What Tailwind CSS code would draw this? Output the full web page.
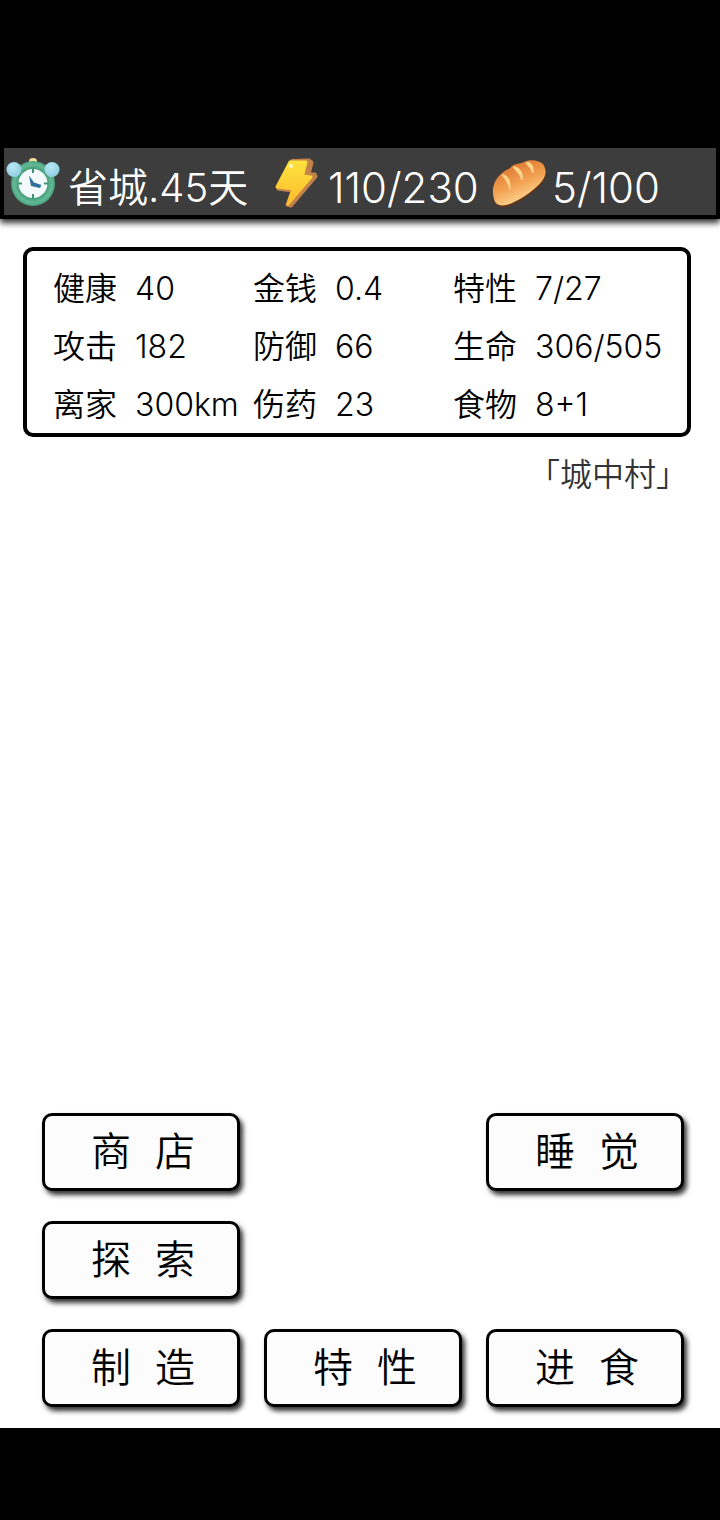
<!DOCTYPE html>
<html lang="zh-CN">
  <head>
    <meta charset="UTF-8" />
    <meta name="viewport" content="width=device-width, initial-scale=1.0" />
    <title>省城</title>
    <script src="https://cdn.jsdelivr.net/npm/@tailwindcss/browser@4"></script>
  </head>
  <body
    class="min-h-screen flex flex-col bg-black pt-[148px] pb-[92px] font-['Inter','Noto_Sans_CJK_SC',sans-serif] font-[350] text-black">
    <!-- Status bar -->
    <header
      class="relative z-10 flex items-center h-[71px] pl-0.5 bg-[#3d3d3d] border-x-4 border-b-4 border-black text-white leading-[40px] shadow-[0_4px_6px_rgba(0,0,0,0.8)]">
      <div class="flex items-center w-[268px]">
        <svg class="w-14 h-14 shrink-0" viewBox="0 0 56 56" aria-hidden="true">
          <defs>
            <radialGradient id="bell" cx="40%" cy="35%" r="65%">
              <stop offset="0" stop-color="#b9e8f4" />
              <stop offset="1" stop-color="#8fcfe2" />
            </radialGradient>
            <radialGradient id="ring" cx="50%" cy="50%" r="50%">
              <stop offset="0.66" stop-color="#459c78" />
              <stop offset="0.84" stop-color="#62bb96" />
              <stop offset="1" stop-color="#4aa37e" />
            </radialGradient>
          </defs>
          <ellipse cx="27" cy="7" rx="4" ry="3" fill="#f3dd94" />
          <ellipse cx="27" cy="29.500" rx="22" ry="22.500" fill="url(#ring)" />
          <circle cx="8" cy="15.500" r="7.500" fill="url(#bell)" />
          <circle cx="46" cy="15.500" r="7.500" fill="url(#bell)" />
          <circle cx="27" cy="29.500" r="14.500" fill="#f4fafc" />
          <path d="M27 15v4M27 40v4M12 29.500h4M38 29.500h4" stroke="#3c9273" stroke-width="2" />
          <path d="M23 21.500L28 28.500L35.500 31L34 34L25 32Z" fill="#2f719e" />
        </svg>
        <span class="pl-1.5 pt-3 text-[40px] whitespace-nowrap">省城.45天</span>
      </div>
      <div class="flex items-center w-[216px]">
        <svg class="w-12 h-14 shrink-0" viewBox="0 0 48 56" aria-hidden="true">
          <defs>
            <linearGradient id="bolt" x1="0" y1="0" x2="0" y2="1">
              <stop offset="0" stop-color="#ffe23c" />
              <stop offset="1" stop-color="#fbbd2c" />
            </linearGradient>
          </defs>
          <path
            d="M18 6.500L35 6L38 8.500L35 20L41 20L42 22.500L17 52L13 51L18 37L4 35Z"
            fill="#c4824a" stroke="#c4824a" stroke-width="3" stroke-linejoin="round" />
          <path
            d="M16 8L32 8L28.500 22L37 23L14 50L19 35L3 33Z"
            fill="url(#bolt)" stroke="url(#bolt)" stroke-width="3" stroke-linejoin="round" />
          <circle cx="17" cy="12" r="2" fill="#fff8c8" />
        </svg>
        <span class="pl-1.5 pt-3 text-[42px]">110/230</span>
      </div>
      <div class="flex items-center">
        <svg class="w-14 h-14 shrink-0" viewBox="0 0 56 56" aria-hidden="true">
          <defs>
            <linearGradient id="loaf" x1="0.3" y1="0.1" x2="0.7" y2="0.9">
              <stop offset="0" stop-color="#dd782f" />
              <stop offset="0.5" stop-color="#f3a153" />
              <stop offset="1" stop-color="#ffdf9b" />
            </linearGradient>
          </defs>
          <path
            d="M4 46C1 36 4 27 12 20C15 17 19 17 22 13C26 10 31 11 34 9C39 6 49 6 53 11C58 17 56 24 53 28C47 36 33 46 24 50C14 55 6 54 4 46Z"
            fill="#6b3312" />
          <path
            d="M4 45C1 35 4 26 12 19C15 16 19 16 22 12C26 9 31 10 34 8C39 5 49 6 53 10C57 16 56 22 52 27C46 35 33 44 24 48C14 53 6 53 4 45Z"
            fill="url(#loaf)" />
          <path
            d="M12 21C15 20 21 24 20 35C18 29 16 26 12 21ZM23 13C27 12 34 17 32 26C30 20 27 18 23 13ZM36 9C40 7 44 11 43 19C41 14 39 13 36 9Z"
            fill="#ffd58c" stroke="#ffd58c" stroke-linejoin="round" />
        </svg>
        <span class="pl-1.5 pt-3 text-[42px]">5/100</span>
      </div>
    </header>

    <main class="flex flex-col grow bg-white pt-7">
      <!-- Stats -->
      <dl
        class="grid grid-cols-[200px_200px_1fr] gap-y-[10px] ml-[23px] mr-[29px] pl-[26px] pt-[14px] pb-1 border-4 border-black rounded-[10px] text-[32px] leading-[48px] whitespace-nowrap">
        <div class="flex">
          <dt class="w-[82px]">健康</dt>
          <dd>40</dd>
        </div>
        <div class="flex">
          <dt class="w-[82px]">金钱</dt>
          <dd>0.4</dd>
        </div>
        <div class="flex">
          <dt class="w-[82px]">特性</dt>
          <dd>7/27</dd>
        </div>
        <div class="flex">
          <dt class="w-[82px]">攻击</dt>
          <dd>182</dd>
        </div>
        <div class="flex">
          <dt class="w-[82px]">防御</dt>
          <dd>66</dd>
        </div>
        <div class="flex">
          <dt class="w-[82px]">生命</dt>
          <dd>306/505</dd>
        </div>
        <div class="flex">
          <dt class="w-[82px]">离家</dt>
          <dd>300km</dd>
        </div>
        <div class="flex">
          <dt class="w-[82px]">伤药</dt>
          <dd>23</dd>
        </div>
        <div class="flex">
          <dt class="w-[82px]">食物</dt>
          <dd>8+1</dd>
        </div>
      </dl>
      <p class="mt-[14px] mr-8 text-right text-[32px] leading-[48px] text-[#333333]">「城中村」</p>

      <!-- Actions -->
      <div
        class="grid grid-cols-3 gap-x-6 gap-y-[30px] mt-auto ml-[42px] mr-9 pb-[21px] text-[40px] leading-[72px]">
        <button type="button" class="flex justify-center gap-6 h-[78px] pl-1 bg-[#fcfcfc] border-3 border-black rounded-[10px] shadow-[3px_4px_5px_rgba(0,0,0,0.8)]"><span>商</span> <span>店</span></button>
        <button type="button" class="col-start-3 flex justify-center gap-6 h-[78px] pl-1 bg-[#fcfcfc] border-3 border-black rounded-[10px] shadow-[3px_4px_5px_rgba(0,0,0,0.8)]"><span>睡</span> <span>觉</span></button>
        <button type="button" class="col-start-1 flex justify-center gap-6 h-[78px] pl-1 bg-[#fcfcfc] border-3 border-black rounded-[10px] shadow-[3px_4px_5px_rgba(0,0,0,0.8)]"><span>探</span> <span>索</span></button>
        <button type="button" class="col-start-1 flex justify-center gap-6 h-[78px] pl-1 bg-[#fcfcfc] border-3 border-black rounded-[10px] shadow-[3px_4px_5px_rgba(0,0,0,0.8)]"><span>制</span> <span>造</span></button>
        <button type="button" class="flex justify-center gap-6 h-[78px] pl-1 bg-[#fcfcfc] border-3 border-black rounded-[10px] shadow-[3px_4px_5px_rgba(0,0,0,0.8)]"><span>特</span> <span>性</span></button>
        <button type="button" class="flex justify-center gap-6 h-[78px] pl-1 bg-[#fcfcfc] border-3 border-black rounded-[10px] shadow-[3px_4px_5px_rgba(0,0,0,0.8)]"><span>进</span> <span>食</span></button>
      </div>
    </main>
  </body>
</html>
